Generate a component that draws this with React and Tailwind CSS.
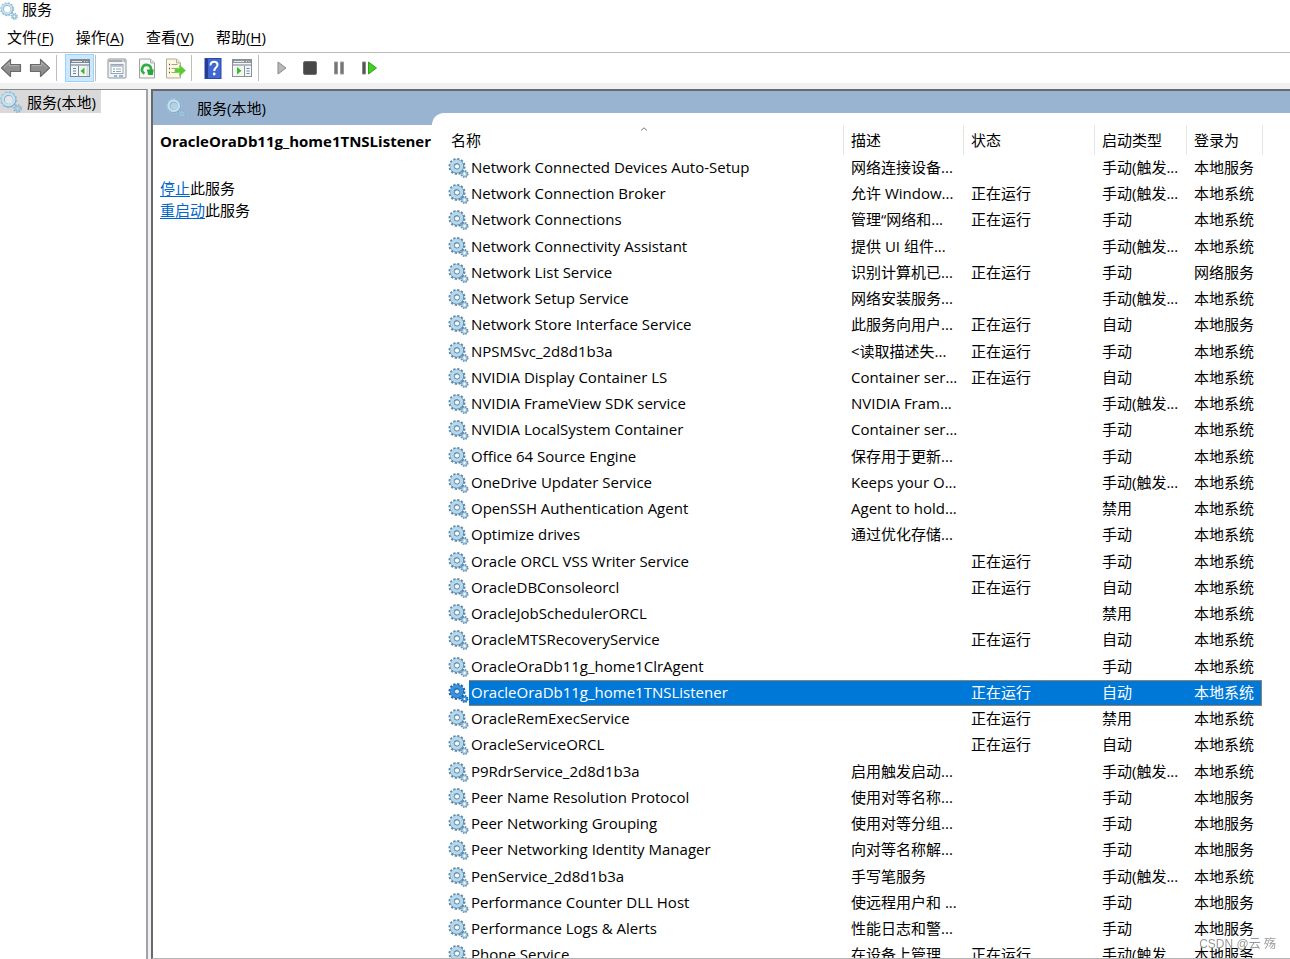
const services = [
  ["Network Connected Devices Auto-Setup", "网络连接设备...", "", "手动(触发...", "本地服务"],
  ["Network Connection Broker", "允许 Window...", "正在运行", "手动(触发...", "本地系统"],
  ["Network Connections", "管理“网络和...", "正在运行", "手动", "本地系统"],
  ["Network Connectivity Assistant", "提供 UI 组件...", "", "手动(触发...", "本地系统"],
  ["Network List Service", "识别计算机已...", "正在运行", "手动", "网络服务"],
  ["Network Setup Service", "网络安装服务...", "", "手动(触发...", "本地系统"],
  ["Network Store Interface Service", "此服务向用户...", "正在运行", "自动", "本地服务"],
  ["NPSMSvc_2d8d1b3a", "<读取描述失...", "正在运行", "手动", "本地系统"],
  ["NVIDIA Display Container LS", "Container ser...", "正在运行", "自动", "本地系统"],
  ["NVIDIA FrameView SDK service", "NVIDIA Fram...", "", "手动(触发...", "本地系统"],
  ["NVIDIA LocalSystem Container", "Container ser...", "", "手动", "本地系统"],
  ["Office 64 Source Engine", "保存用于更新...", "", "手动", "本地系统"],
  ["OneDrive Updater Service", "Keeps your O...", "", "手动(触发...", "本地系统"],
  ["OpenSSH Authentication Agent", "Agent to hold...", "", "禁用", "本地系统"],
  ["Optimize drives", "通过优化存储...", "", "手动", "本地系统"],
  ["Oracle ORCL VSS Writer Service", "", "正在运行", "手动", "本地系统"],
  ["OracleDBConsoleorcl", "", "正在运行", "自动", "本地系统"],
  ["OracleJobSchedulerORCL", "", "", "禁用", "本地系统"],
  ["OracleMTSRecoveryService", "", "正在运行", "自动", "本地系统"],
  ["OracleOraDb11g_home1ClrAgent", "", "", "手动", "本地系统"],
  ["OracleOraDb11g_home1TNSListener", "", "正在运行", "自动", "本地系统"],
  ["OracleRemExecService", "", "正在运行", "禁用", "本地系统"],
  ["OracleServiceORCL", "", "正在运行", "自动", "本地系统"],
  ["P9RdrService_2d8d1b3a", "启用触发启动...", "", "手动(触发...", "本地系统"],
  ["Peer Name Resolution Protocol", "使用对等名称...", "", "手动", "本地服务"],
  ["Peer Networking Grouping", "使用对等分组...", "", "手动", "本地服务"],
  ["Peer Networking Identity Manager", "向对等名称解...", "", "手动", "本地服务"],
  ["PenService_2d8d1b3a", "手写笔服务", "", "手动(触发...", "本地系统"],
  ["Performance Counter DLL Host", "使远程用户和 ...", "", "手动", "本地服务"],
  ["Performance Logs & Alerts", "性能日志和警...", "", "手动", "本地服务"],
  ["Phone Service", "在设备上管理...", "正在运行", "手动(触发...", "本地服务"],
];

const selected = "OracleOraDb11g_home1TNSListener";

const menus = [
  ["文件", "F"],
  ["操作", "A"],
  ["查看", "V"],
  ["帮助", "H"],
];

function Gears({ className, active }) {
  const light = active ? "#3a93dc" : "#b4d8ed";
  const dark = active ? "#1c66ae" : "#5f89a8";
  return (
    <svg viewBox="0 0 20 20" className={className} aria-hidden="true">
      <circle cx="8.5" cy="8.5" r="7.3" fill="none" stroke={dark} strokeWidth="2.4" strokeDasharray="2.2 1.62" />
      <circle cx="8.5" cy="8.5" r="4.8" fill="none" stroke={dark} strokeWidth="4.4" />
      <circle cx="8.2" cy="8.2" r="4.7" fill="none" stroke={light} strokeWidth="3.6" />
      <circle cx="8.5" cy="8.5" r="2.6" fill={active ? "#d6ebfa" : "#fff"} stroke={dark} strokeWidth="1" />
      <circle cx="16" cy="16" r="3.1" fill="none" stroke={dark} strokeWidth="1.8" strokeDasharray="1.4 1.04" />
      <circle cx="16" cy="16" r="1.9" fill="#fff" stroke={light} strokeWidth="1.8" />
      <circle cx="16" cy="16" r="2.7" fill="none" stroke={dark} strokeWidth="0.6" />
    </svg>
  );
}

function SoftGears({ className }) {
  return (
    <svg viewBox="0 0 20 20" className={className} aria-hidden="true">
      <circle cx="8" cy="8" r="7" fill="none" stroke="#a3c4da" strokeWidth="1.8" strokeDasharray="2 1.66" />
      <circle cx="8" cy="8" r="5.2" fill="none" stroke="#7fa9c8" strokeWidth="3.4" />
      <circle cx="7.7" cy="7.7" r="5.2" fill="none" stroke="#c2e2f2" strokeWidth="2.4" />
      <circle cx="8" cy="8" r="3.6" fill="#fff" fillOpacity=".35" />
      <circle cx="16" cy="16" r="3.2" fill="none" stroke="#86adc8" strokeWidth="1.5" strokeDasharray="1.4 1.1" />
      <circle cx="16" cy="16" r="1.9" fill="none" stroke="#9cc6de" strokeWidth="1.8" />
    </svg>
  );
}

function Arrow({ flip }) {
  return (
    <svg viewBox="0 0 22 20" className={flip ? "h-5 w-[22px] -scale-x-100" : "h-5 w-[22px]"}>
      <path d="M1.5 10 10.5 1.5v5H20.500v7H10.500v5z" fill="#8f8f8f" stroke="#6a6a6a" strokeWidth="1.2" strokeLinejoin="round" />
      <path d="M4 9.500 9.300 4.500v3.200H19" fill="none" stroke="#b5b5b5" />
    </svg>
  );
}

function TreeIcon() {
  return (
    <svg viewBox="0 0 20 18" className="h-[18px] w-5">
      <rect x=".5" y=".5" width="19" height="17" fill="#f4f6f7" stroke="#7f8a94" />
      <path d="M1 1h18v3H1z" fill="#7d8a96" />
      <path d="M2 2.500h10M14 2.500h1M16.500 2.500h1" stroke="#dfe5ea" />
      <path d="M1 6h18" stroke="#a9b3bb" strokeWidth="2" />
      <path d="M8.500 7v10.500" stroke="#7f8a94" />
      <path d="M3 9.500h3M3 12h3M3 14.500h3" stroke="#4b8ec6" />
      <path d="M14.500 8.500v7L10.500 12z" fill="#3eb82c" />
      <path d="M17.500 7v10" stroke="#d5dadd" strokeWidth="2" />
    </svg>
  );
}

function PropertiesIcon() {
  return (
    <svg viewBox="0 0 20 21" className="h-[21px] w-5">
      <rect x="1" y="1" width="18" height="19" rx="1" fill="#f2f3f5" stroke="#8b929a" />
      <path d="M2 3h16" stroke="#a3acb5" strokeWidth="2" />
      <path d="M15 3h2" stroke="#fff" />
      <rect x="4" y="6.500" width="12" height="9" fill="#fff" stroke="#9aa5b4" />
      <path d="M4 8h12" stroke="#b8c2d0" strokeWidth="2" />
      <path d="M6 11h2M6 13.500h2" stroke="#45a3d4" />
      <path d="M9 11h5M9 13.500h5" stroke="#9ba3ad" />
      <path d="M7 18h3M12 18h4" stroke="#6ba7cf" strokeWidth="1.500" />
    </svg>
  );
}

function RefreshIcon() {
  return (
    <svg viewBox="0 0 18 21" className="h-[21px] w-[18px]">
      <path d="M1.500 1h11l4 4v15h-15z" fill="#f8f8f8" stroke="#a0a0a0" />
      <path d="M12.500 1v4h4" fill="#ddd" stroke="#b5b5b5" />
      <path d="M6.500 15.500A4.500 4.500 0 1 1 13 12" fill="none" stroke="#32ad43" strokeWidth="2.600" />
      <path d="M8.800 11.500h7l-1 5.500h-4.500z" fill="#2aa53b" />
    </svg>
  );
}

function ExportIcon() {
  return (
    <svg viewBox="0 0 21 21" className="h-[21px] w-[21px]">
      <path d="M1.500 1h10l4 4v15h-14z" fill="#fdf8e1" stroke="#b0aa98" />
      <path d="M11.500 1v4h4" fill="#eee8d0" stroke="#b8b29e" />
      <path d="M4 6.500h1M4 10.500h1M4 14.500h1" stroke="#555" strokeWidth="1.500" />
      <path d="M6.500 6.500h6M6.500 10.500h5M6.500 14.500h5" stroke="#a4a08b" />
      <path d="M10 10.500h4.500V7l6 5.500-6 5.500v-3.500H10z" fill="#58cd32" stroke="#7cc95d" strokeWidth=".7" />
    </svg>
  );
}

function HelpIcon() {
  return (
    <svg viewBox="0 0 18 21" className="h-[21px] w-[18px]">
      <rect x="1" y=".5" width="16" height="20" fill="#4167d3" stroke="#2c48a8" />
      <path d="M2.500 1v19" stroke="#233c94" strokeWidth="3" />
      <path d="M6.500 7.500q0-3.700 3.500-3.700t3.500 3.200c0 2.500-3.300 2.700-3.300 6" fill="none" stroke="#fff" strokeWidth="2" />
      <circle cx="10.200" cy="16" r="1.400" fill="#fff" />
    </svg>
  );
}

function ActionPaneIcon() {
  return (
    <svg viewBox="0 0 20 18" className="h-[18px] w-5">
      <rect x=".5" y=".5" width="19" height="17" fill="#f5f5f3" stroke="#8a9097" />
      <path d="M1 1h18v3H1z" fill="#8c969f" />
      <path d="M2 2.500h10M14 2.500h1M16.500 2.500h1" stroke="#e3e7ea" />
      <path d="M1 6h18" stroke="#b3bac0" strokeWidth="2" />
      <path d="M12.500 7v10.500" stroke="#8a9097" />
      <path d="M14.500 9.500h3M14.500 12h3M14.500 14.500h3" stroke="#4b8ec6" />
      <path d="M5 8v7.500L9.500 11.700z" fill="#35bd29" />
    </svg>
  );
}

function StartIcon() {
  return (
    <svg viewBox="0 0 10 14" className="h-3.5 w-2.5">
      <path d="M1 1l8 6-8 6z" fill="#b9b9b9" stroke="#888" strokeLinejoin="round" />
    </svg>
  );
}

function StopIcon() {
  return (
    <svg viewBox="0 0 14 14" className="h-3.5 w-3.5">
      <rect x=".5" y=".5" width="13" height="13" rx="1.500" fill="#484848" stroke="#6d6d6d" />
    </svg>
  );
}

function PauseIcon() {
  return (
    <svg viewBox="0 0 12 14" className="h-3.5 w-3">
      <path d="M1.500 1h3v12h-3zM7.500 1h3v12h-3z" fill="#767676" stroke="#999" />
    </svg>
  );
}

function RestartIcon() {
  return (
    <svg viewBox="0 0 16 14" className="h-3.5 w-4">
      <path d="M1.500 1h3v12h-3z" fill="#555" stroke="#888" />
      <path d="M7.500 1l8 6-8 6z" fill="#45cc27" stroke="#2da51b" strokeLinejoin="round" />
    </svg>
  );
}

function ToolButton({ label, children, className = "" }) {
  return (
    <button type="button" aria-label={label} className={`flex h-7 items-center justify-center ${className}`}>
      {children}
    </button>
  );
}

function Separator() {
  return <div className="h-[26px] w-px bg-[#bdbdbd]" />;
}

function ServiceRow({ service }) {
  const [name, description, status, startup, logon] = service;
  const active = name === selected;
  const cell = active
    ? "border-y border-[#8f8472] bg-[#0078d7] p-0 pb-0.5 leading-5 text-white"
    : "p-0 pb-0.5";
  return (
    <tr className="h-[26px] nth-[4n]:h-[27px]">
      <td className="p-0 pl-1">
        <Gears active={active} className="h-5 w-[21px]" />
      </td>
      <td className={`${cell} pl-[2px]`}>{name}</td>
      <td className={`${cell} pl-2`}>{description}</td>
      <td className={`${cell} pl-2`}>{status}</td>
      <td className={`${cell} pl-2`}>{startup}</td>
      <td className={active ? `${cell} border-r pl-2` : `${cell} pl-2`}>{logon}</td>
      <td className="p-0" />
    </tr>
  );
}

export default function App() {
  return (
    <div className="flex h-screen flex-col overflow-hidden bg-white font-['Open_Sans','Noto_Sans_CJK_SC',sans-serif] text-[15px] leading-[22px] text-black">
      <header className="flex h-[22px] shrink-0 items-center gap-1">
        <SoftGears className="h-[18px] w-[18px]" />
        <h1 className="pb-1">服务</h1>
      </header>
      <nav className="flex h-[30px] shrink-0 items-center gap-[22px] px-[7px]">
        {menus.map(([label, key]) => (
          <button key={key} type="button">
            {label}(<span className="underline underline-offset-2">{key}</span>)
          </button>
        ))}
      </nav>
      <div className="flex h-[31px] shrink-0 items-center border-t border-[#bcbcbc]">
        <ToolButton label="后退"><Arrow /></ToolButton>
        <ToolButton label="前进" className="ml-[7px]"><Arrow flip /></ToolButton>
        <div className="ml-[5px] flex items-center">
          <Separator />
          <ToolButton label="显示/隐藏控制台树" className="ml-2 w-[29px] border border-[#99d1ff] bg-[#cce8ff]"><TreeIcon /></ToolButton>
        </div>
        <div className="ml-px flex items-center"><Separator /></div>
        <ToolButton label="属性" className="ml-[11px]"><PropertiesIcon /></ToolButton>
        <ToolButton label="刷新" className="ml-[11px]"><RefreshIcon /></ToolButton>
        <ToolButton label="导出列表" className="ml-[9px]"><ExportIcon /></ToolButton>
        <div className="ml-[5px]"><Separator /></div>
        <ToolButton label="帮助" className="ml-3"><HelpIcon /></ToolButton>
        <ToolButton label="显示/隐藏操作窗格" className="ml-[10px]"><ActionPaneIcon /></ToolButton>
        <div className="ml-[6px]"><Separator /></div>
        <ToolButton label="启动服务" className="ml-[18px]"><StartIcon /></ToolButton>
        <ToolButton label="停止服务" className="ml-4"><StopIcon /></ToolButton>
        <ToolButton label="暂停服务" className="ml-4"><PauseIcon /></ToolButton>
        <ToolButton label="重新启动服务" className="ml-4"><RestartIcon /></ToolButton>
      </div>

      <div className="flex min-h-0 flex-1 bg-[#f0f0f0] pt-[6px]">
        <aside className="w-[148px] shrink-0 border-t border-r-2 border-[#828790] border-r-[#a0a4aa] bg-white">
          <button type="button" className="flex h-[23px] items-center gap-[5px] bg-[#d9d9d9] pr-[5px]">
            <SoftGears className="h-[22px] w-[22px]" />
            服务(本地)
          </button>
        </aside>

        <main className="ml-[3px] flex min-w-0 flex-1 border-t-2 border-b border-l-2 border-[#696969] border-b-[#b4b4b4] bg-white">
          <section className="relative z-10 w-[279px] shrink-0">
            <div className="flex h-[34px] items-center gap-[11px] bg-[#99b4d1] pl-[13px]">
              <SoftGears className="h-5 w-5" />
              服务(本地)
            </div>
            <div className="pt-[5px] pl-[7px]">
              <h2 className="font-bold whitespace-nowrap">{selected}</h2>
              <p className="mt-[25px]">
                <a href="#stop" className="text-[#0066cc] underline underline-offset-2">停止</a>此服务
              </p>
              <p>
                <a href="#restart" className="text-[#0066cc] underline underline-offset-2">重启动</a>此服务
              </p>
            </div>
          </section>

          <section className="min-w-0 flex-1 bg-[#99b4d1] pt-[22px]">
            <div className="h-full overflow-hidden rounded-tl-[12px] bg-white pt-3 pl-3">
              <table className="w-full table-fixed border-separate border-spacing-0 whitespace-nowrap">
                <colgroup>
                  <col className="w-[25px]" />
                  <col />
                  <col className="w-[120px]" />
                  <col className="w-[131px]" />
                  <col className="w-[92px]" />
                  <col className="w-[76px]" />
                  <col className="w-7" />
                </colgroup>
                <thead>
                  <tr className="h-[30px] text-left">
                    <th colSpan={2} className="relative p-0 pl-[7px] font-normal">
                      名称
                      <svg viewBox="0 0 8 4" className="absolute top-0.5 left-1/2 h-1 w-2 -translate-x-1/2">
                        <path d="M1 3.500 4 .8 7 3.500" fill="none" stroke="#777" />
                      </svg>
                    </th>
                    <th className="border-l border-[#e5e5e5] p-0 pl-[7px] font-normal">描述</th>
                    <th className="border-l border-[#e5e5e5] p-0 pl-[7px] font-normal">状态</th>
                    <th className="border-l border-[#e5e5e5] p-0 pl-[7px] font-normal">启动类型</th>
                    <th className="border-l border-[#e5e5e5] p-0 pl-[7px] font-normal">登录为</th>
                    <th className="border-l border-[#e5e5e5] p-0" />
                  </tr>
                </thead>
                <tbody>
                  {services.map((service) => (
                    <ServiceRow key={service[0]} service={service} />
                  ))}
                </tbody>
              </table>
            </div>
          </section>
        </main>
      </div>

      <div className="fixed right-[14px] bottom-1 font-['Liberation_Sans','Noto_Sans_CJK_SC',sans-serif] text-xs leading-[22px] text-[#999]">
        CSDN @云 殇
      </div>
    </div>
  );
}
